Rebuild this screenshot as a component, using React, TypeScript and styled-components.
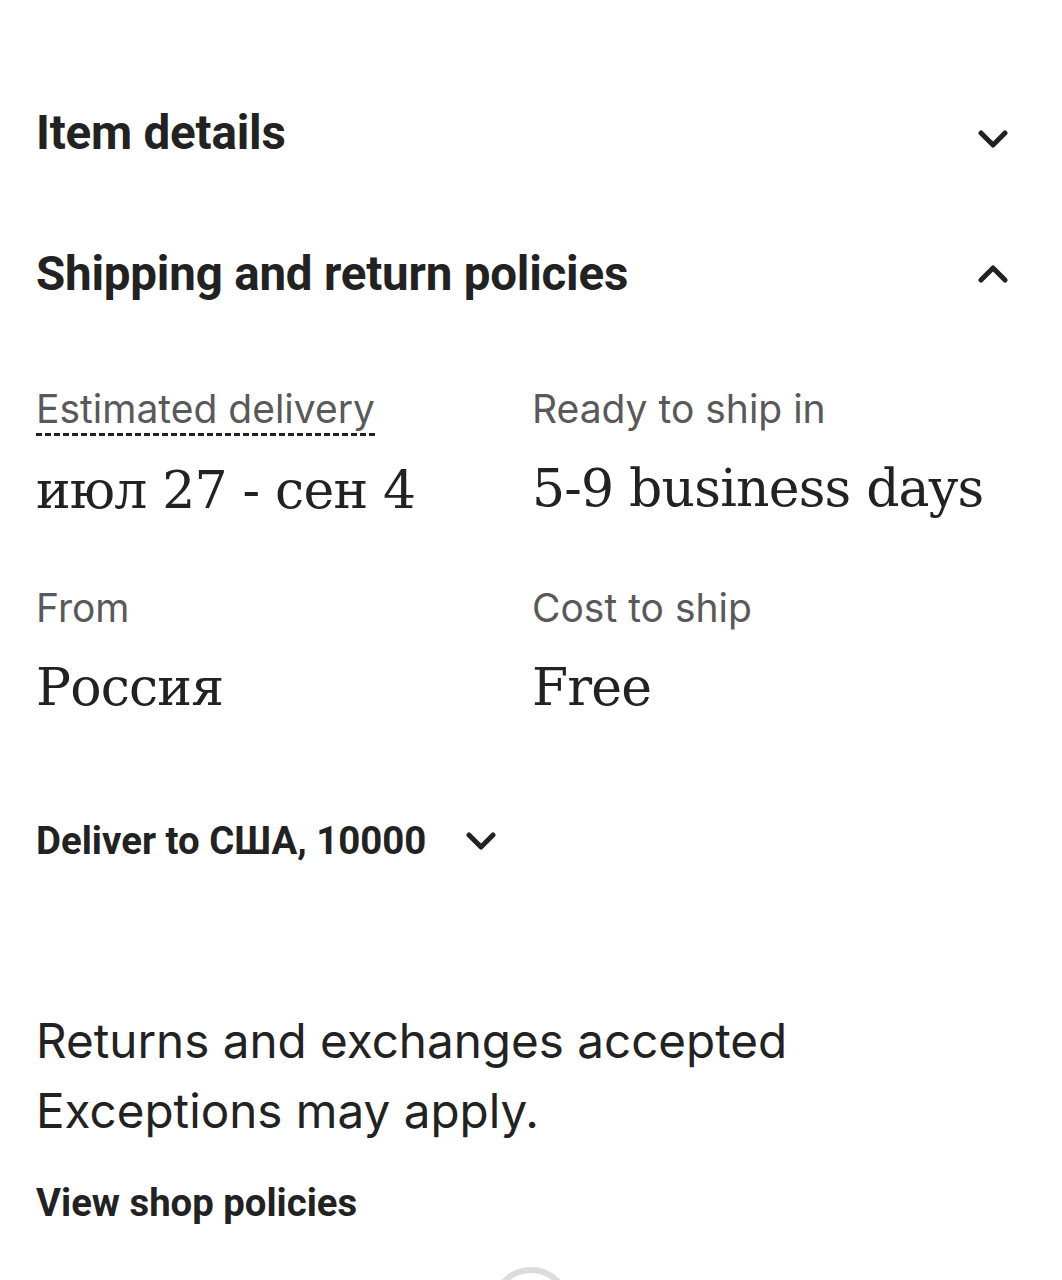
import React from 'react';
import styled, { createGlobalStyle } from 'styled-components';

const GlobalStyle = createGlobalStyle`
  html, body {
    margin: 0;
    padding: 0;
    background: #fff;
  }
  body {
    font-family: Roboto, "Noto Sans", sans-serif;
    color: #222;
  }
`;

const Page = styled.div`
  width: 1062px;
  height: 1280px;
  overflow: hidden;
  box-sizing: border-box;
  padding: 0 36px;
`;

const SectionHeader = styled.button<{ top: number }>`
  all: unset;
  box-sizing: border-box;
  display: flex;
  align-items: center;
  justify-content: space-between;
  width: 100%;
  height: 70px;
  margin-top: ${({ top }) => top}px;
  cursor: pointer;
`;

const HeaderTitle = styled.h2`
  margin: 0;
  font-family: Roboto, sans-serif;
  font-weight: 700;
  font-size: 47.5px;
  letter-spacing: -0.2px;
  color: #222;
`;

const Chevron = ({ up, size = 30 }: { up?: boolean; size?: number }) => (
  <svg
    width={size}
    height={size}
    viewBox="0 0 30 30"
    fill="none"
    stroke="#222"
    strokeWidth={5}
    strokeLinecap="round"
    strokeLinejoin="round"
  >
    {up ? (
      <path d="M3 21 L15 9 L27 21" />
    ) : (
      <path d="M3 9 L15 21 L27 9" />
    )}
  </svg>
);

const ChevronSlot = styled.span<{ shift?: number }>`
  display: flex;
  align-items: center;
  margin-right: 18px;
  transform: translateY(${({ shift = 0 }) => shift}px);
`;

const Facts = styled.div`
  display: grid;
  grid-template-columns: 496px 1fr;
  row-gap: 64px;
  margin-top: 78px;
`;

const Fact = styled.div`
  display: flex;
  flex-direction: column;
`;

const Label = styled.span<{ dotted?: boolean }>`
  align-self: flex-start;
  font-family: Inter, "Open Sans", sans-serif;
  font-size: 39px;
  line-height: 44px;
  color: #595959;
  padding-bottom: ${({ dotted }) => (dotted ? 2 : 0)}px;
  border-bottom: ${({ dotted }) => (dotted ? '3px dashed #222' : '3px solid transparent')};
`;

const Value = styled.span`
  margin-top: 22px;
  font-family: "DejaVu Serif", "Liberation Serif", serif;
  font-size: 52px;
  line-height: 64px;
  color: #222;
  letter-spacing: -0.8px;
`;

const DeliverButton = styled.button`
  all: unset;
  display: inline-flex;
  align-items: center;
  gap: 40px;
  margin-top: 100px;
  font-family: Roboto, sans-serif;
  font-weight: 700;
  font-size: 38.4px;
  line-height: 44px;
  color: #222;
  cursor: pointer;
`;

const Returns = styled.p`
  margin: 143px 0 0;
  font-family: Inter, "Open Sans", sans-serif;
  font-size: 47.6px;
  line-height: 70px;
  color: #222;
`;

const PolicyLink = styled.a`
  display: block;
  margin-top: 35px;
  font-family: Roboto, sans-serif;
  font-weight: 700;
  font-size: 38.3px;
  line-height: 44px;
  color: #222;
  text-decoration: none;
`;

const SpinnerRow = styled.div`
  display: flex;
  justify-content: center;
  margin-top: 42px;
`;

const Spinner = styled.div`
  width: 80px;
  height: 80px;
  border-radius: 50%;
  border: 6px solid #dcdcdc;
  box-sizing: border-box;
`;

const facts = [
  { label: 'Estimated delivery', value: 'июл 27 - сен 4', dotted: true },
  { label: 'Ready to ship in', value: '5-9 business days' },
  { label: 'From', value: 'Россия' },
  { label: 'Cost to ship', value: 'Free' },
];

export default function App() {
  return (
    <>
      <GlobalStyle />
      <Page>
        <SectionHeader top={98}>
          <HeaderTitle>Item details</HeaderTitle>
          <ChevronSlot shift={6}>
            <Chevron />
          </ChevronSlot>
        </SectionHeader>
        <SectionHeader top={71}>
          <HeaderTitle>Shipping and return policies</HeaderTitle>
          <ChevronSlot>
            <Chevron up />
          </ChevronSlot>
        </SectionHeader>
        <Facts>
          {facts.map((f) => (
            <Fact key={f.label}>
              <Label dotted={f.dotted}>{f.label}</Label>
              <Value>{f.value}</Value>
            </Fact>
          ))}
        </Facts>
        <DeliverButton>
          Deliver to США, 10000
          <Chevron />
        </DeliverButton>
        <Returns>
          Returns and exchanges accepted
          <br />
          Exceptions may apply.
        </Returns>
        <PolicyLink href="#">View shop policies</PolicyLink>
        <SpinnerRow>
          <Spinner />
        </SpinnerRow>
      </Page>
    </>
  );
}
